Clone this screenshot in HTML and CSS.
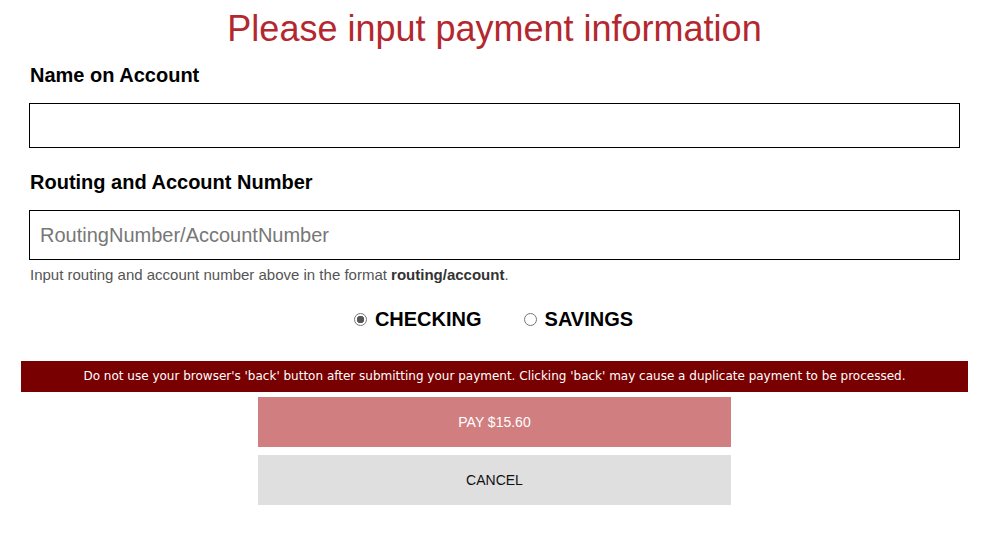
FILE: index.html
```html
<!DOCTYPE html>
<html lang="en">
    <head>
        <meta charset="UTF-8">
        <meta name="viewport" content="width=device-width, initial-scale=1.0">
        <title>Payment Information</title>
        <link rel="stylesheet" href="styles.css">
    </head>
    <body>
        <div class="page">
            <h1>Please input payment information</h1>
            <form id="payment-form">
                <label for="account-name">Name on Account</label>
                <input type="text" id="account-name" name="accountName" class="name-input">

                <label for="account-number">Routing and Account Number</label>
                <input type="text" id="account-number" name="accountNumber" class="number-input" placeholder="RoutingNumber/AccountNumber">
                <p class="help">Input routing and account number above in the format <b>routing/account</b>.</p>

                <div class="account-type">
                    <label class="radio"><input type="radio" name="type" value="checking" checked> CHECKING</label>
                    <label class="radio"><input type="radio" name="type" value="savings"> SAVINGS</label>
                </div>
            </form>

            <div class="warning">Do not use your browser's 'back' button after submitting your payment. Clicking 'back' may cause a duplicate payment to be processed.</div>

            <div class="actions">
                <button type="submit" form="payment-form" class="pay-btn">PAY $15.60</button>
                <button type="button" class="cancel-btn">CANCEL</button>
            </div>
        </div>
    </body>
</html>
```

FILE: styles.css
```css
body {
    font-family: "Liberation Sans", Arial, sans-serif;
    margin: 0;
    padding: 0;
    background-color: white;
    color: black;
}
.page {
    width: 947px;
    margin-left: 21px;
}
h1 {
    margin: 9px 0 0;
    font-size: 36px;
    line-height: 40px;
    font-weight: normal;
    text-align: center;
    color: #b3282f;
}
form {
    padding: 0 8px;
}
label {
    display: block;
    margin: 14px 0 16px 1px;
    font-size: 20px;
    line-height: 24px;
    font-weight: bold;
}
input[type="text"] {
    display: block;
    box-sizing: border-box;
    width: 100%;
    margin: 0;
    padding: 0 10px;
    border: 1px solid black;
    border-radius: 0;
    font-family: "Liberation Sans", Arial, sans-serif;
    font-size: 20px;
}
input::placeholder {
    color: #777;
}
.name-input {
    height: 45px;
    margin-bottom: 22px !important;
}
.number-input {
    height: 50px;
}
.help {
    margin: 6px 0 0 1px;
    font-size: 15px;
    line-height: 18px;
    color: #555;
}
.help b {
    color: #333;
}
.account-type {
    display: flex;
    justify-content: center;
    gap: 42px;
    margin-top: 20px;
    padding-right: 2px;
    height: 30px;
}
.radio {
    display: flex;
    align-items: center;
    gap: 8px;
    margin: 0;
}
.radio input {
    appearance: none;
    width: 13px;
    height: 13px;
    margin: 0;
    border: 1px solid #767676;
    border-radius: 50%;
    background-color: white;
}
.radio input:checked {
    background: radial-gradient(circle, #555 0 3.5px, white 4px);
}
.warning {
    margin-top: 27px;
    padding: 8px 0;
    height: 15px;
    background-color: #790000;
    color: white;
    font-family: "DejaVu Sans", Verdana, sans-serif;
    font-size: 12px;
    line-height: 15px;
    text-align: center;
}
.actions {
    display: flex;
    flex-direction: column;
    align-items: center;
    gap: 8px;
    margin-top: 5px;
}
button {
    width: 473px;
    height: 50px;
    border: none;
    border-radius: 0;
    font-family: "Liberation Sans", Arial, sans-serif;
    font-size: 14px;
    cursor: pointer;
}
.pay-btn {
    background-color: #d17e80;
    color: white;
}
.cancel-btn {
    background-color: #dfdfdf;
    color: #111;
}
```
